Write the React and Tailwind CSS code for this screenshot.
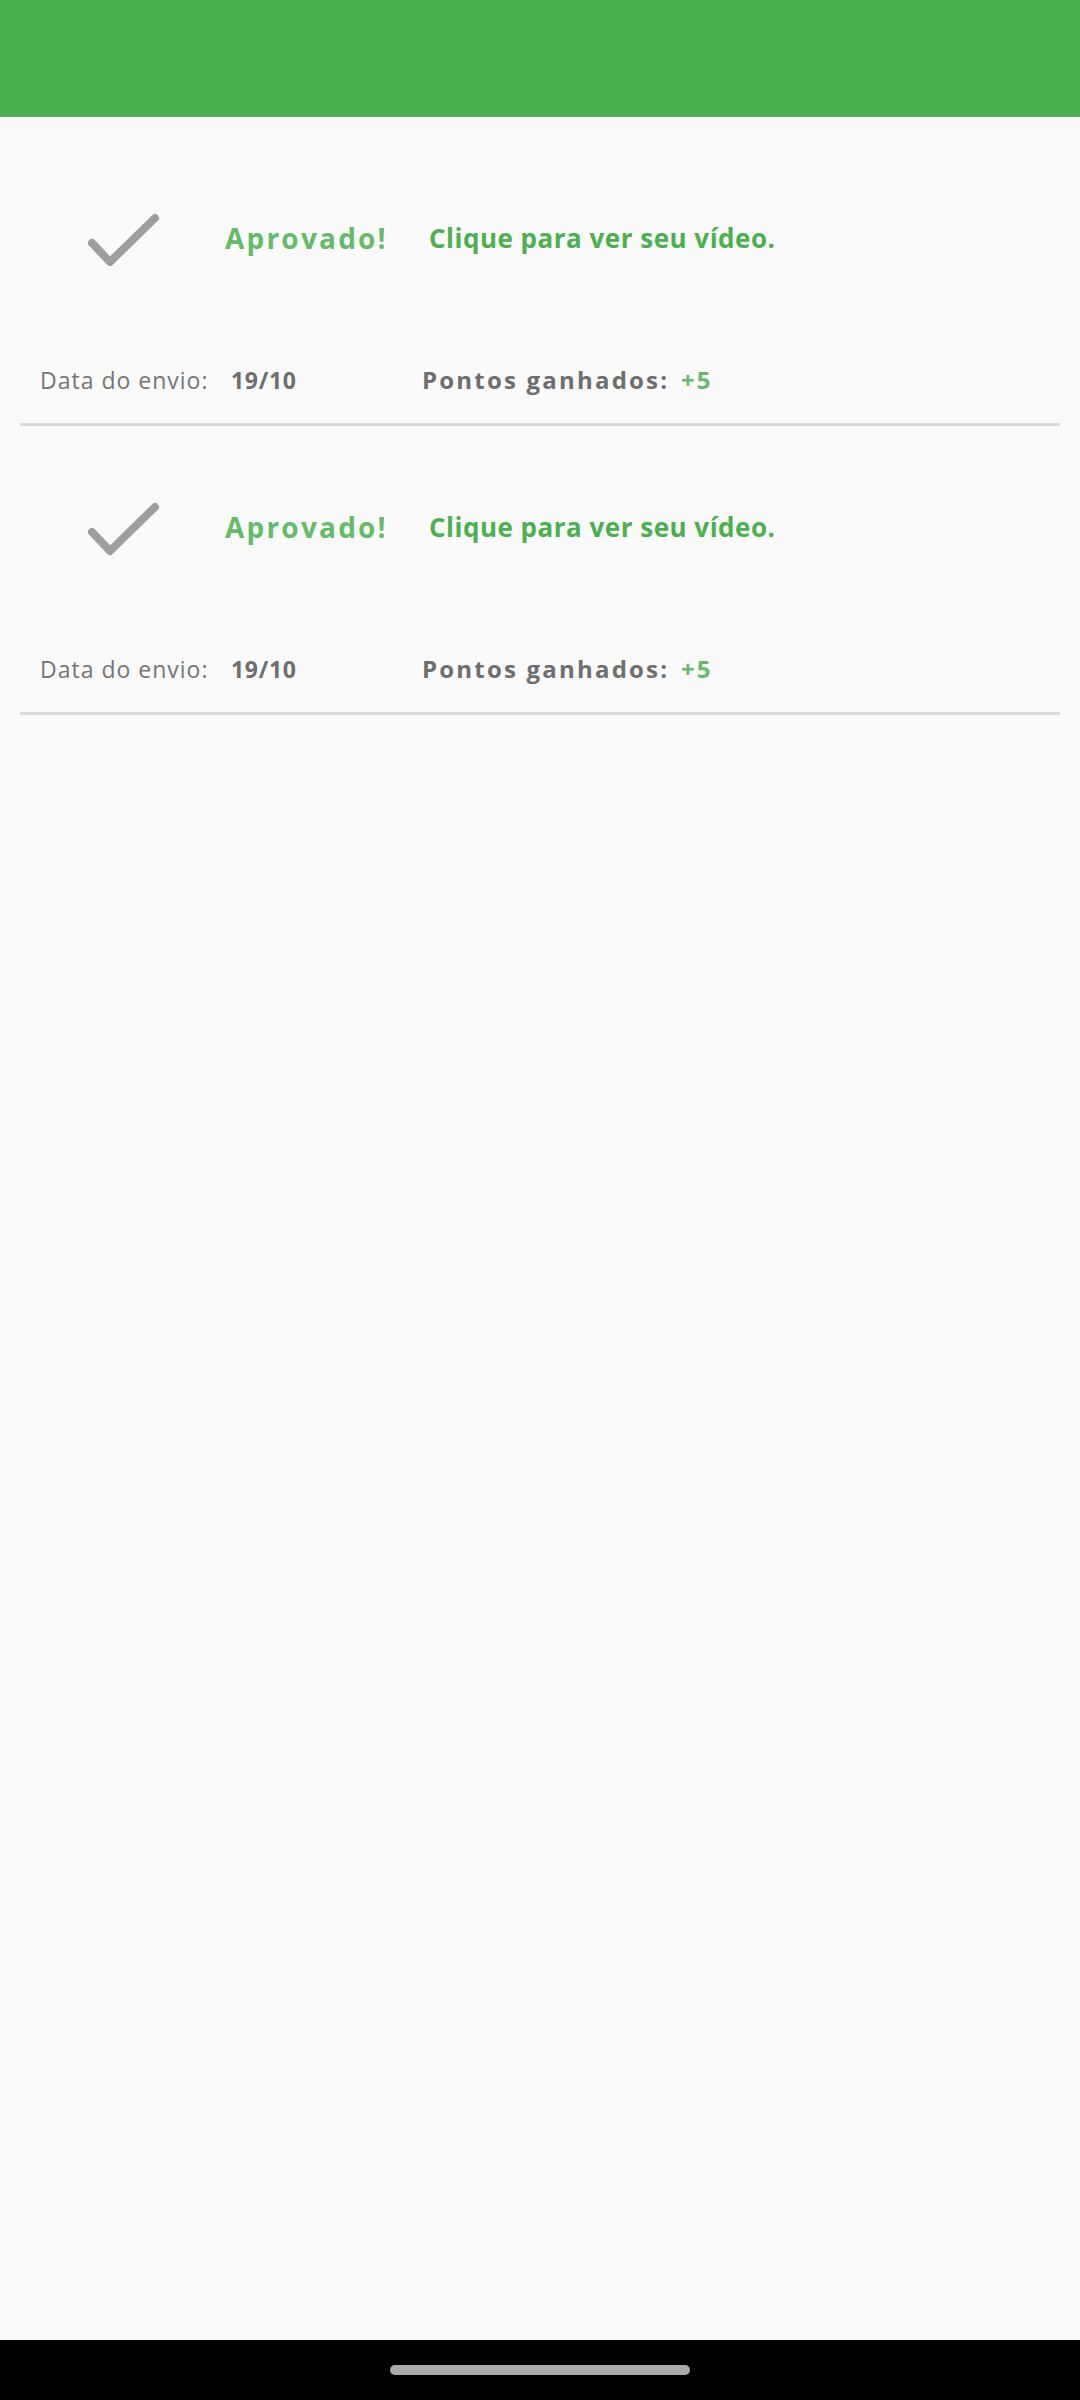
export default function App() {
  const items = [1, 2];
  return (
    <div className="min-h-[2400px] w-[1080px] bg-[#fafafa] flex flex-col" style={{ fontFamily: '"Open Sans", "Noto Sans", sans-serif' }}>
      <div className="h-[117px] bg-[#4caf50] shrink-0" />
      <div className="flex-1 pt-[20px]">
        {items.map((i) => (
          <div key={i} className="flex flex-col">
            <div className="h-[206px] flex items-center">
              <div className="pl-[80px] flex items-center">
                <svg width="90" height="80" viewBox="0 0 90 80" className="block">
                  <polyline points="12,43 30,62 75,18" fill="none" stroke="#9e9e9e" strokeWidth="8" strokeLinecap="round" strokeLinejoin="round" />
                </svg>
              </div>
              <div className="ml-[55px] w-[204px] text-[28px] font-bold text-[#66bb6a] tracking-[2.2px] leading-none -mt-[5px]">Aprovado!</div>
              <div className="text-[26px] font-bold text-[#4caf50] tracking-[0.5px] leading-none -mt-[5px]">Clique para ver seu vídeo.</div>
            </div>
            <div className="h-[72px] flex items-center pl-[40px] text-[23px] leading-none pt-[2px]">
              <span className="w-[191px] text-[#757575] tracking-[1px]">Data do envio:</span>
              <span className="w-[191px] font-bold text-[#6e6e6e] tracking-[0.7px]">19/10</span>
              <span className="w-[259px] font-bold text-[#6e6e6e] text-[24px] tracking-[2.2px]">Pontos ganhados:</span>
              <span className="font-bold text-[#66bb6a] text-[24px] tracking-[2px]">+5</span>
            </div>
            <div className="h-[8px]" />
            <div className="mx-[20px] h-[3px] bg-[#dadada]" />
          </div>
        ))}
      </div>
      <div className="h-[60px] bg-black flex items-center justify-center shrink-0">
        <div className="w-[300px] h-[10px] rounded-full bg-[#aaaaaa]" />
      </div>
    </div>
  );
}
